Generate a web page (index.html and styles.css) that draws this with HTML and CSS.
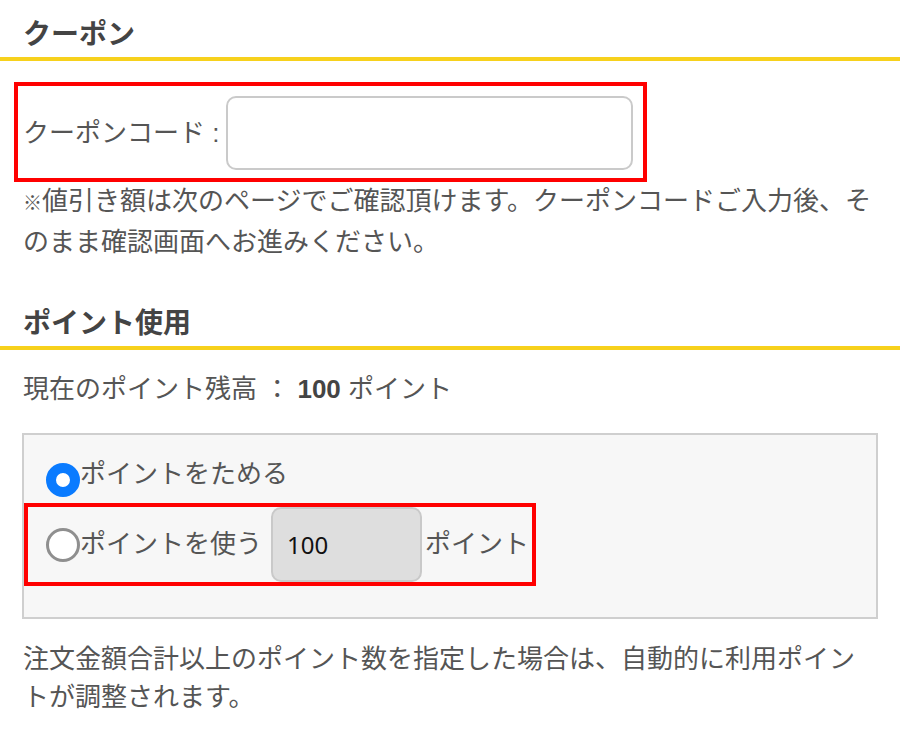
FILE: index.html
```html
<!DOCTYPE html>
<html lang="ja">
  <head>
    <meta charset="utf-8" />
    <meta name="viewport" content="width=device-width, initial-scale=1.0" />

    <title>クーポン・ポイント使用</title>

    <link rel="stylesheet" href="styles.css">
  </head>
  <body>
    <section class="block">
      <h2 class="block-title">クーポン</h2>
      <div class="block-body">
        <div class="coupon-row highlight">
          <label class="coupon-label" for="coupon">クーポンコード :</label>
          <input id="coupon" class="text-field coupon-field" type="text" name="coupon" />
        </div>
        <p class="note"><span class="note-mark">※</span>値引き額は次のページでご確認頂けます。クーポンコードご入力後、そのまま確認画面へお進みください。</p>
      </div>
    </section>

    <section class="block block-points">
      <h2 class="block-title">ポイント使用</h2>
      <div class="block-body">
        <p class="balance">現在のポイント残高 ： <b>100</b> ポイント</p>

        <div class="points-box">
          <label class="option option-keep">
            <input class="radio" type="radio" name="use_point" checked />
            <span>ポイントをためる</span>
          </label>
          <label class="option option-use highlight">
            <input class="radio" type="radio" name="use_point" />
            <span>ポイントを使う</span>
            <input class="text-field point-field" type="text" value="100" disabled />
            <span>ポイント</span>
          </label>
        </div>

        <p class="note note-after">
          注文金額合計以上のポイント数を指定した場合は、自動的に利用ポイントが調整されます。
        </p>
      </div>
    </section>
  </body>
</html>
```

FILE: styles.css
```css
html,
body {
  margin: 0;
  background: #fff;
}

body {
  font-family: "Liberation Sans", "Noto Sans CJK JP", sans-serif;
  font-size: 26px;
  color: #555;
}

p {
  margin: 0;
}

.block-title {
  margin: 0;
  padding: 15px 23px 3px;
  font-size: 28px;
  line-height: 39px;
  font-weight: bold;
  color: #444;
  border-bottom: 4px solid #f7d11c;
}

.block-body {
  padding: 0 26px 0 23px;
}

.block-points {
  margin-top: 27px;
}

/* red frames around the inputs */
.highlight {
  border: 4px solid #f00;
}

.coupon-row {
  display: flex;
  align-items: center;
  width: fit-content;
  margin: 21px 0 0 -9px;
  padding: 10px 10px 8px 5px;
}

.coupon-label {
  line-height: 39px;
  margin-right: 7px;
}

.text-field {
  box-sizing: border-box;
  border: 2px solid #cacaca;
  border-radius: 10px;
  font-family: "Noto Sans", sans-serif;
  outline: none;
}

.coupon-field {
  width: 407px;
  height: 74px;
  background: #fff;
}

.note {
  line-height: 39px;
}

.note-mark {
  font-size: 19px;
}

.note-after {
  margin-top: 21px;
  line-height: 38px;
}

.balance {
  margin-top: 20px;
  line-height: 39px;
}

.balance b {
  color: #444;
}

.points-box {
  margin: 24px -4px 0 -1px;
  padding: 20px 0 31px;
  background: #f7f7f7;
  border: 2px solid #cfcfcf;
}

.option {
  display: flex;
  line-height: 39px;
}

.option-keep {
  align-items: flex-start;
  padding-left: 22px;
  margin-bottom: 6px;
}

.option-keep .radio {
  margin-top: 8px;
}

.option-use {
  align-items: center;
  width: fit-content;
  padding: 0 3px 0 18px;
}

.radio {
  appearance: none;
  -webkit-appearance: none;
  box-sizing: border-box;
  flex: none;
  width: 34px;
  height: 34px;
  margin: 0;
  border: 3px solid #8f8f8f;
  border-radius: 50%;
  background: #fff;
}

.radio:checked {
  border: 10px solid #0a7bff;
}

.point-field {
  width: 151px;
  height: 75px;
  margin: 0 3px 0 9px;
  padding: 0 14px;
  font-size: 24px;
  color: #111;
  background: #dedede;
  border-color: #c9c9c9;
}
```
